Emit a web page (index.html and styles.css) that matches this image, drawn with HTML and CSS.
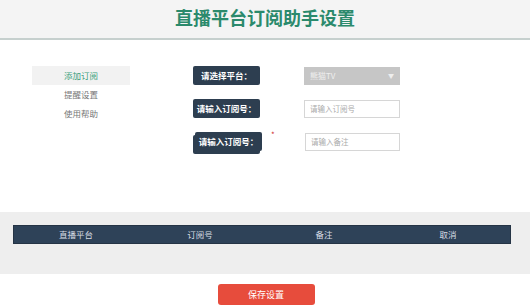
FILE: index.html
```
<!DOCTYPE html>
<html>
<head>
	<title>直播平台订阅助手设置</title>
	<meta charset="utf-8">
	<link rel="stylesheet" href="styles.css">
</head>
<body>
	<header>
		<h1>直播平台订阅助手设置</h1>
	</header>
	<div class="main">
		<ul class="side">
			<li class="active">添加订阅</li>
			<li>提醒设置</li>
			<li>使用帮助</li>
		</ul>
		<div class="form">
			<div class="row">
				<span class="label">请选择平台：</span>
				<div class="select">熊猫TV <span class="arrow">▼</span></div>
			</div>
			<div class="row">
				<span class="label">请输入订阅号：</span>
				<input class="field" type="text" placeholder="请输入订阅号">
			</div>
			<div class="row third">
				<span class="label">请输入订阅号：</span>
				<span class="star">*</span>
				<input class="field" type="text" placeholder="请输入备注">
			</div>
		</div>
	</div>
	<div class="band">
		<div class="thead">
			<span>直播平台</span>
			<span>订阅号</span>
			<span>备注</span>
			<span>取消</span>
		</div>
	</div>
	<div class="foot">
		<button class="save">保存设置</button>
	</div>
</body>
</html>
```
FILE: styles.css
```
* {
	padding: 0px;
	margin: 0px;
	box-sizing: border-box;
}
body {
	font-family: "Noto Sans CJK SC", "Noto Sans", sans-serif;
	background-color: white;
	overflow: hidden;
}
header {
	height: 40px;
	background-color: #f4f4f4;
	border-bottom: 2px solid #c6d0ce;
	text-align: center;
}
h1 {
	font-size: 18px;
	line-height: 35px;
	color: #2b8a6c;
	font-weight: bold;
}
.main {
	display: flex;
	height: 172px;
	padding: 26px 0 0 32px;
}
.side {
	list-style: none;
	width: 98px;
}
.side li {
	height: 19px;
	line-height: 19px;
	text-align: center;
	font-size: 8.5px;
	color: #777;
}
.side .active {
	background-color: #f2f2f2;
	color: #3a9f7c;
}
.form {
	margin-left: 63px;
	display: flex;
	flex-direction: column;
	gap: 14px;
}
.row {
	display: flex;
	align-items: center;
	height: 19px;
}
.label {
	width: 67px;
	height: 19px;
	line-height: 19px;
	background-color: #2d3e50;
	color: white;
	font-size: 8.5px;
	font-weight: bold;
	text-align: center;
	border-radius: 2px;
	margin-right: 44px;
}
.select {
	width: 96px;
	height: 18px;
	background-color: #c6c6c6;
	color: #eee;
	font-size: 8px;
	line-height: 18px;
	padding: 0 6px;
	display: flex;
	justify-content: space-between;
}
.arrow {
	font-size: 6px;
}
.field {
	width: 96px;
	height: 18px;
	border: 1px solid #d6d6d6;
	font-size: 7.5px;
	padding-left: 5px;
	font-family: inherit;
	outline: none;
}
.field::placeholder {
	color: #aaa;
}
.third .label {
	margin-left: 2px;
	margin-right: 0;
	box-shadow: -2px 3px 0 #2d3e50;
}
.star {
	color: #d03030;
	font-size: 8px;
	width: 44px;
	padding-left: 9px;
	align-self: flex-start;
	line-height: 6px;
}
.third .field {
	margin-left: -1px;
	width: 95px;
}
.band {
	height: 62px;
	background-color: #eeeeee;
	padding: 13px 19px 0 13px;
}
.thead {
	display: flex;
	height: 19px;
	background-color: #2e4258;
	border: 1px solid #253445;
}
.thead span {
	flex: 1;
	text-align: center;
	color: #d8dde4;
	font-size: 8.5px;
	line-height: 17px;
}
.foot {
	padding-top: 10px;
}
.save {
	display: block;
	width: 97px;
	height: 21px;
	margin: 0 auto;
	position: relative;
	left: 1px;
	background-color: #e74c3c;
	color: white;
	border: none;
	border-radius: 3px;
	font-size: 9px;
	font-family: inherit;
}
```
